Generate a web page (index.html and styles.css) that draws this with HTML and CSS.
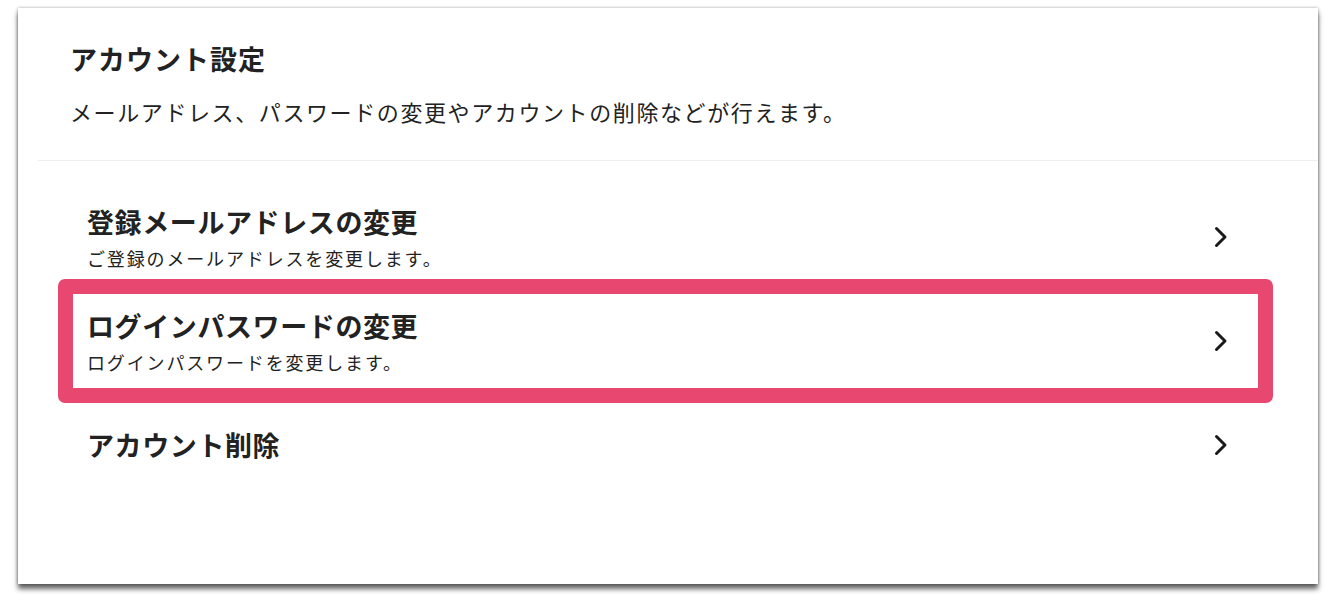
FILE: index.html
```html
<!DOCTYPE html>
<html lang="ja">
<head>
    <meta charset="UTF-8">
    <meta name="viewport" content="width=device-width, initial-scale=1.0">
    <title>アカウント設定</title>
    <link rel="stylesheet" href="styles.css">
</head>
<body>
    <div class="card">
        <!-- Header -->
        <div class="card-header">
            <h1>アカウント設定</h1>
            <p>メールアドレス、パスワードの変更やアカウントの削除などが行えます。</p>
        </div>
        <hr class="divider">

        <!-- Menu -->
        <ul class="menu">
            <li class="menu-item">
                <div class="item-text">
                    <h2>登録メールアドレスの変更</h2>
                    <p>ご登録のメールアドレスを変更します。</p>
                </div>
                <svg class="chevron" width="14" height="22" viewBox="0 0 14 22"><polyline points="2.5,2.5 11,11 2.5,19.5" /></svg>
            </li>
            <li class="menu-item highlight">
                <div class="item-text">
                    <h2>ログインパスワードの変更</h2>
                    <p>ログインパスワードを変更します。</p>
                </div>
                <svg class="chevron" width="14" height="22" viewBox="0 0 14 22"><polyline points="2.5,2.5 11,11 2.5,19.5" /></svg>
            </li>
            <li class="menu-item">
                <div class="item-text">
                    <h2>アカウント削除</h2>
                </div>
                <svg class="chevron" width="14" height="22" viewBox="0 0 14 22"><polyline points="2.5,2.5 11,11 2.5,19.5" /></svg>
            </li>
        </ul>
    </div>
</body>
</html>
```

FILE: styles.css
```css
body {
    margin: 0;
    padding: 8px 0 20px;
    background: #fff;
    font-family: "Noto Sans CJK JP", "Noto Sans", sans-serif;
    color: #222;
}
.card {
    margin: 0 0 0 18px;
    width: 1300px;
    height: 576px;
    background: #fff;
    box-shadow: 0 5px 5px rgba(0, 0, 0, 0.6), 0 0 3px rgba(0, 0, 0, 0.35);
}
.card-header {
    padding: 33px 52px 33px;
}
.card-header h1 {
    margin: 0;
    font-size: 27px;
    line-height: 36px;
    font-weight: bold;
    letter-spacing: 1px;
}
.card-header p {
    margin: 18px 0 0;
    font-size: 22px;
    line-height: 32px;
    letter-spacing: 1.6px;
    color: #222;
}
.divider {
    margin: 0 0 0 20px;
    border: none;
    border-top: 1px solid #eeeeee;
}
.menu {
    list-style: none;
    margin: 0 60px 0 55px;
    padding: 29px 0 0;
    display: flex;
    flex-direction: column;
    gap: 10px;
}
.menu-item {
    height: 94px;
    padding: 0 30px 0 14px;
    display: flex;
    align-items: center;
    justify-content: space-between;
    background: #fff;
    cursor: pointer;
}
.item-text h2 {
    margin: 0;
    font-size: 27px;
    line-height: 36px;
    font-weight: bold;
    letter-spacing: 0.6px;
}
.item-text p {
    margin: 6px 0 0;
    font-size: 18px;
    line-height: 24px;
    letter-spacing: 1.85px;
    color: #222;
}
.chevron polyline {
    fill: none;
    stroke: #1a1a1a;
    stroke-width: 3;
    stroke-linecap: round;
    stroke-linejoin: round;
}
.highlight {
    position: relative;
}
.highlight::after {
    content: "";
    position: absolute;
    top: -15px;
    left: -15px;
    right: -15px;
    bottom: -15px;
    border: 15px solid #e8476f;
    border-radius: 7px;
    pointer-events: none;
}
```
